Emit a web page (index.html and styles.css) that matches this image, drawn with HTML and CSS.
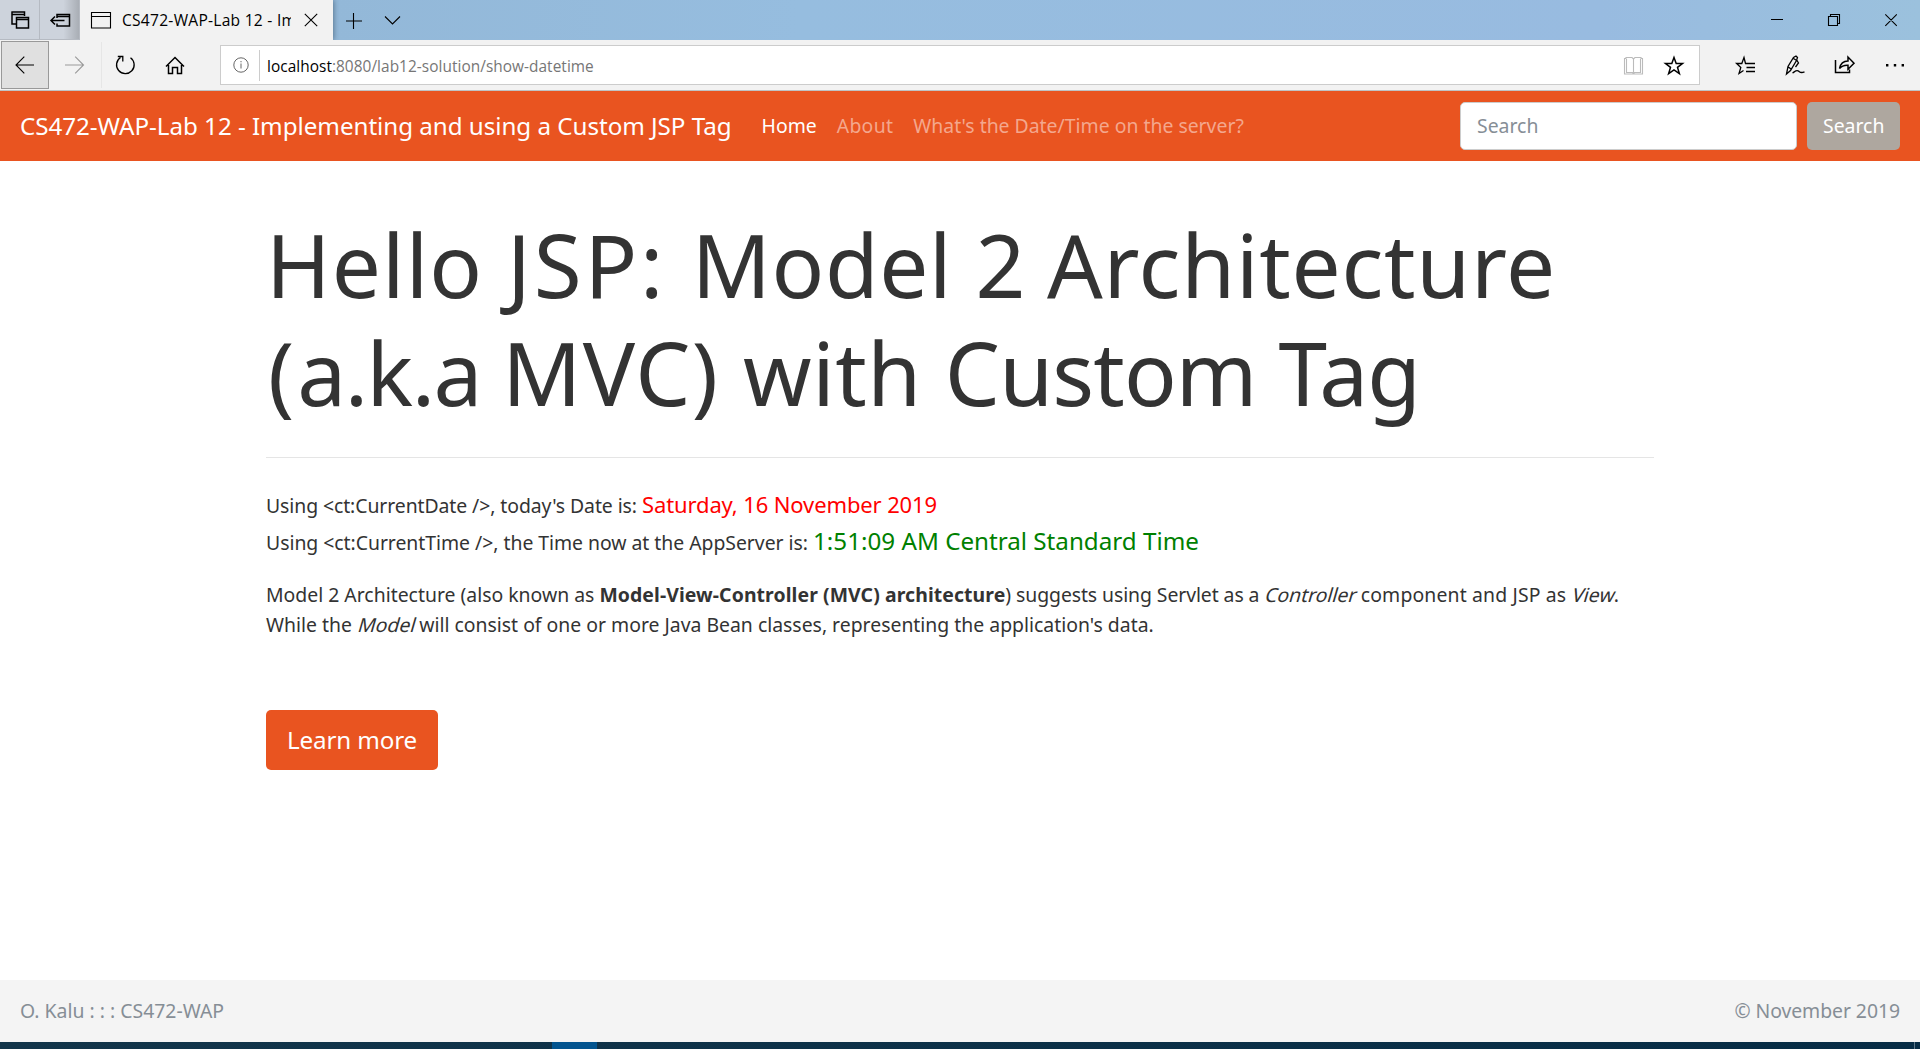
FILE: index.html
```html
<!DOCTYPE html>
<html lang="en">
<head>
<meta charset="utf-8">
<title>CS472-WAP-Lab 12 - Implementing and using a Custom JSP Tag</title>
<link rel="stylesheet" href="styles.css">
</head>
<body>
<header class="titlebar">
  <div class="tab-tool"><svg width="38" height="40" viewBox="1 0 38 40"><path d="M11.5 12h13v4M12 11.500v12.500h4M11.500 14.500h13M16.500 17.500h12v10.500h-12zM16.500 19.500h12" class="ink thick"/></svg></div>
  <div class="tab-tool tab-tool-last"><svg width="38" height="40" viewBox="41 0 38 40"><path d="M57 18v-3.500h12.500v11.500H57v-2.500M57 16.500h12.500M51 20.500h13.500M55 16.500l-4 4 4 4" class="ink thick"/></svg></div>
  <div class="tab">
    <svg width="22" height="18" viewBox="90 10 22 18"><path d="M91.500 11.500h19v15.500h-19zM91.500 15.500h19" class="ink"/></svg>
    <div class="tab-title">CS472-WAP-Lab 12 - Im</div>
    <svg class="tab-close" width="14" height="14" viewBox="0 0 14 14"><path d="M.8.800l12.400 12.400M13.200.800L.8 13.200" class="ink"/></svg>
  </div>
  <svg class="tab-actions" width="60" height="40" viewBox="342 0 60 40"><path d="M346 21h16M353.500 13v16M385 16.500l7.500 7.500 7.500-7.500" class="ink"/></svg>
  <svg class="window-controls" width="150" height="40" viewBox="1770 0 150 40"><path d="M1771 19.500h12M1828.500 16.500h9v9h-9zM1830.500 16v-1.500h9v9h-1.500M1885.300 14.300l11.500 11.500M1896.800 14.300l-11.500 11.500" class="ink"/></svg>
</header>
<div class="toolbar">
  <div class="back"><svg width="20" height="20" viewBox="15 55 20 20"><path d="M16 65h18M24.300 56.700L16 65l8.300 8.300" class="ink"/></svg></div>
  <svg class="nav-icons" width="171" height="50" viewBox="49 40 171 50">
    <path d="M65 65h18.500M75.200 56.700l8.300 8.300-8.300 8.300" class="ink pale"/>
    <path d="M101.500 42v46" class="hairline"/>
    <path d="M130.500 57.700A8.800 8.800 0 1 1 120.500 57.500M117.800 56.500h5v5" class="ink medium"/>
    <path d="M166 66.500l9-9 9 9M168.500 65v8.500h4v-6h5v6h4V65" class="ink thick"/>
  </svg>
  <div class="address">
    <svg class="info" width="16" height="16" viewBox="0 0 16 16"><circle cx="8" cy="8" r="7.200" class="ink mid"/><path d="M8 6.500v5M8 4v1.300" class="ink mid"/></svg>
    <span class="url-text"><b>localhost</b>:8080/lab12-solution/show-datetime</span>
    <svg class="address-icons" width="80" height="38" viewBox="1619 46 80 38">
      <path d="M1624.500 58.500h1.500v-1h6l1.500 1.500 1.500-1.500h6v1h1.500v15.500h-18zM1633.500 59v14M1626.500 59v13.500h6l1 1 1-1h6V59" class="ink book"/>
      <path d="M1674 57.500l2.200 6h6.300l-5 3.900 1.900 6.300-5.400-3.700-5.400 3.700 1.900-6.300-5-3.900h6.300z" class="ink thick"/>
    </svg>
  </div>
  <svg width="219" height="50" viewBox="1701 40 219 50">
    <path d="M1755 63.500h-9.500l-1.500-6-2.200 6h-5.200l4.200 3.900-1.800 6.100 4.500-3M1755 67.500h-8.500M1755 71.500h-9" class="ink medium"/>
    <path d="M1786.500 74l1.500-7.500 5.500-9 2.500-1.500 1.500 1.500-1 3-6 10zM1788.300 67l2.700 2M1793.500 58.500l4 2.500M1797 60.500l1.500 2.500-3 4M1792.500 73c2.500-1.500 3.500-3 5.500-2.200s2 3 6.500 1" class="ink medium"/>
    <path d="M1835.500 60v12.500h14v-3M1839.500 68.500c1-5 3.500-7.500 8.500-7.500v-4l6 6.200-6 6v-4c-4-.2-6.300.5-8.500 3.300z" class="ink thick"/>
    <path d="M1886 64h2.400v2.400h-2.400zM1893.800 64h2.400v2.400h-2.400zM1901.600 64h2.400v2.400h-2.400z"/>
  </svg>
</div>
<nav class="navbar">
  <a class="brand">CS472-WAP-Lab 12 - Implementing and using a Custom JSP Tag</a>
  <a class="link active">Home</a>
  <a class="link about-link">About</a>
  <a class="link">What's the Date/Time on the server?</a>
  <form class="search"><div class="input">Search</div><div class="btn">Search</div></form>
</nav>
<main class="content">
  <h1><span class="w-hello">Hello </span><span class="w-jsp">JSP: </span><span class="w-model">Model </span><span class="w-two">2 </span><span class="w-arch">Architecture</span><br><span class="w-paren">(</span><span class="w-aka">a.k.a </span><span class="w-mvc">MVC) </span><span class="w-with">with </span><span class="w-custom">Custom Tag</span></h1>
  <hr>
  <p class="line"><span class="snug">Using &lt;ct:CurrentDate /&gt;, today's Date is:</span> <span class="date">Saturday, 16 November 2019</span></p>
  <p class="line"><span class="snug-less">Using &lt;ct:CurrentTime /&gt;, the Time now at the AppServer is:</span> <span class="time">1:51:09 AM Central Standard Time</span></p>
  <p class="about">Model 2 Architecture (also known as <strong>Model-View-Controller (MVC) architecture</strong><span class="snug">) suggests using Servlet as a</span> <em>Controller</em> <span class="loose">component and JSP as</span> <em class="view">View</em>.<br>While the <em class="model">Model</em> will consist of one or more Java Bean classes, representing the application's data.</p>
  <a class="learn">Learn more</a>
</main>
<footer class="footer"><span>O. Kalu : : : CS472-WAP</span><span class="copyright">© November 2019</span></footer>
<div class="taskbar"><i class="running"></i><i class="peek"></i></div>
</body>
</html>
```
FILE: styles.css
```css
* { box-sizing: border-box; }
body { margin: 0; width: 1920px; height: 1049px; overflow: hidden; display: flex; flex-direction: column; background: #fff; color: #333; font: 19.4px/30px "Noto Sans", sans-serif; }
svg { display: block; flex: none; }
.ink { fill: none; stroke: #000; stroke-width: 1.1; }
.medium { stroke-width: 1.3; }
.thick { stroke-width: 1.5; }
.pale { stroke: #999; }
.mid { stroke: #666; stroke-width: 1; }
.book { stroke: #bbb; }
.hairline { stroke: #e6e6e6; }

/* Browser chrome */
.titlebar { height: 40px; flex: none; display: flex; background: linear-gradient(90deg, #cdd3dc 0, #cdd3dc 80px, #93b8d8 333px, #96bddf 800px, #98bbe0 1600px, #9bc1dd 1920px); }
.tab-tool { width: 40px; padding-left: 1px; border-right: 1px solid #b5bac2; border-bottom: 1px solid #b5bac2; }
.tab-tool-last { background: linear-gradient(90deg, transparent 60%, #a9aeb5); }
.tab { width: 253px; display: flex; align-items: center; padding: 0 14px 0 10px; background: #f2f2f2; font: 15.6px/40px "Open Sans", sans-serif; color: #000; box-shadow: 1px 0 5px #5c7a94; clip-path: inset(0 -6px 0 0); }
.tab-title { width: 169px; margin-left: 10px; overflow: hidden; white-space: nowrap; letter-spacing: .25px; }
.tab-close { margin-left: 13px; }
.tab-actions { margin-left: 9px; }
.window-controls { margin-left: auto; }

.toolbar { height: 51px; flex: none; display: flex; background: #f2f2f2; border-bottom: 1px solid #bfc3c5; }
.back { width: 48px; height: 48px; margin: 1px 0 0 1px; border: 1px solid #999; background: #e0e0e0; display: grid; place-items: center; }
.address { width: 1480px; height: 40px; margin: 5px 1px 0 0; display: flex; align-items: center; background: #fff; border: 1px solid #ccc; }
.info { margin-left: 12px; }
.url-text { margin-left: 10px; padding: 2px 0 0 7px; border-left: 1px solid #ccc; font: 15.4px/29px "Open Sans", sans-serif; color: #767676; letter-spacing: .05px; }
.url-text b { font-weight: 400; color: #000; }
.address-icons { margin-left: auto; }

/* Site navigation */
.navbar { height: 70px; flex: none; display: flex; align-items: center; padding: 0 20px; background: #e95420; color: #fff; white-space: nowrap; }
.brand { font-size: 24.2px; letter-spacing: -.04px; margin-right: 30px; }
.link { margin-right: 20px; color: #f4a78d; }
.link.active { color: #fff; }
.about-link { letter-spacing: .3px; }
.search { margin: 0 0 0 auto; display: flex; gap: 10px; }
.input { width: 337px; height: 48px; padding: 0 16px; line-height: 45px; background: #fff; border: 1px solid #ccc; border-radius: 5px; color: #868e96; }
.btn { width: 93px; height: 48px; padding: 0 16px; line-height: 47px; background: #aea79f; border-radius: 5px; }

/* Page body */
.content { flex: 1; padding: 50px 266px 0; white-space: nowrap; }
h1 { margin: 0; font-size: 87.3px; line-height: 108px; font-weight: 400; }
.w-hello { letter-spacing: 1.1px; }
.w-jsp { letter-spacing: 2.8px; }
.w-model { letter-spacing: .6px; }
.w-two { letter-spacing: -.6px; }
.w-arch { letter-spacing: .75px; }
.w-paren { margin-left: 2px; letter-spacing: 3px; }
.w-aka { letter-spacing: -1.5px; }
.w-mvc { letter-spacing: 1.2px; }
.w-with { letter-spacing: .5px; }
.w-custom { letter-spacing: -.85px; }
hr { margin: 30px 0 29px; border: 0; border-top: 1px solid #e5e5e5; }
.line { margin: 0; height: 37px; line-height: 37px; }
.snug { letter-spacing: -.077px; }
.snug-less { letter-spacing: -.03px; }
.loose { letter-spacing: .15px; }
.date { color: red; font-size: 22px; line-height: 0; letter-spacing: -.12px; }
.time { color: green; font-size: 24.2px; line-height: 0; }
.about { margin: 19px 0 70px; }
strong { letter-spacing: .1px; }
em { display: inline-block; font-style: normal; line-height: 20px; transform: skewX(-16deg); transform-origin: 0 80%; letter-spacing: 0; }
.learn { width: 172px; height: 60px; display: flex; justify-content: center; align-items: center; background: #e95420; border-radius: 5px; color: #fff; font-size: 24.2px; letter-spacing: -.15px; }

.footer { height: 62px; flex: none; display: flex; justify-content: space-between; align-items: center; padding: 0 20px; background: #f4f4f4; color: #868e96; }
.copyright { letter-spacing: -.06px; }
.taskbar { height: 7px; flex: none; display: flex; justify-content: space-between; padding: 0 5px 0 552px; background: linear-gradient(90deg, #12354a, #062c45); }
.running { width: 45px; background: #02548f; }
.peek { width: 1px; background: #5d7789; }
```
